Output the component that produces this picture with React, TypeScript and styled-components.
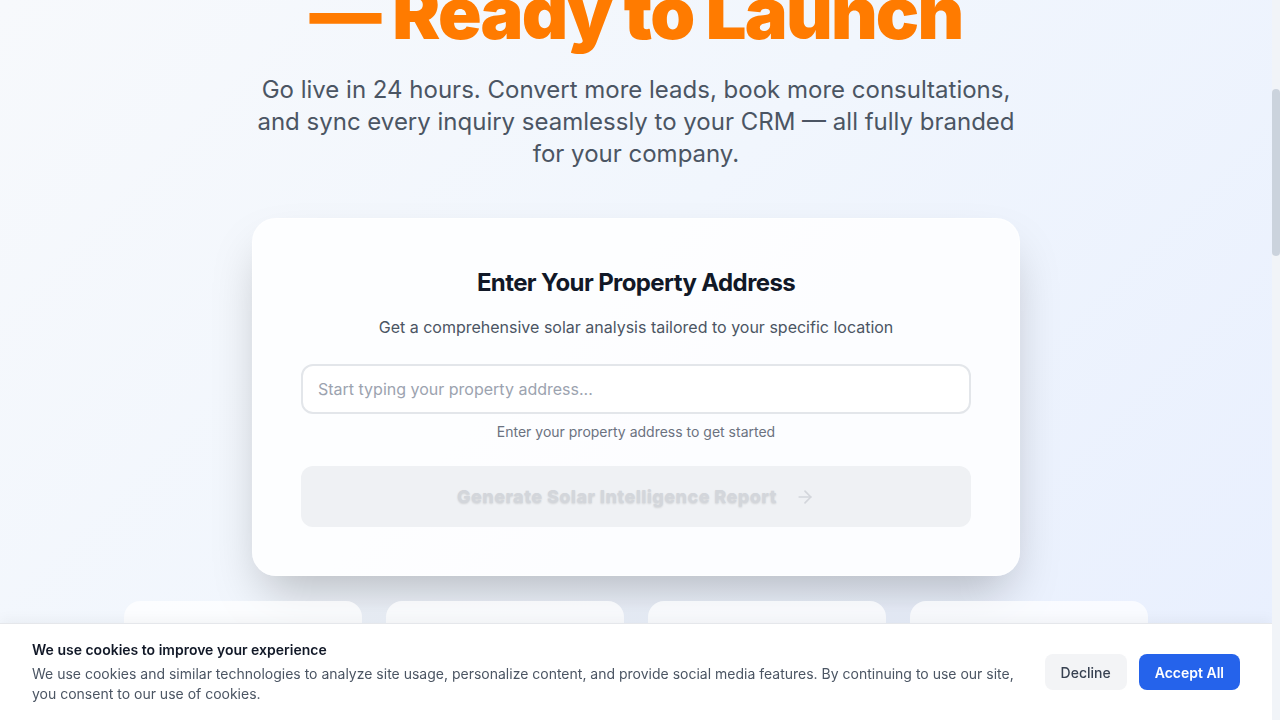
import React, { useLayoutEffect, useRef, useState } from "react";
import styled, { createGlobalStyle } from "styled-components";
import { ArrowRight, Sun, Zap, Link2, Palette } from "lucide-react";

const GlobalStyle = createGlobalStyle`
  html, body { margin: 0; padding: 0; overflow: hidden; }
  body {
    font-family: Inter, "Noto Sans", "Liberation Sans", sans-serif;
    color: #111827;
    -webkit-font-smoothing: antialiased;
  }
  * { box-sizing: border-box; }
`;

const Frame = styled.div`
  height: 100vh;
  display: flex;
`;

const Scroller = styled.div`
  flex: 1;
  min-width: 0;
  height: 100%;
  overflow-y: scroll;
  scrollbar-width: none;
  background: linear-gradient(135deg, #f7f9fc 0%, #f1f6fd 45%, #e8effe 100%);
  &::-webkit-scrollbar { display: none; }
`;

const Rail = styled.div`
  position: relative;
  width: 8px;
  flex-shrink: 0;
  background: #f1f4f8;
`;

const Thumb = styled.div`
  position: absolute;
  left: 0;
  right: 0;
  border-radius: 4px;
  background: #cbd3dd;
`;

const Page = styled.div`
  min-height: 3007px;
`;

const Nav = styled.nav`
  height: 72px;
  display: flex;
  align-items: center;
  justify-content: space-between;
  padding: 0 48px;
`;

const Logo = styled.div`
  font-weight: 800;
  font-size: 20px;
  color: #111827;
`;

const Hero = styled.section`
  display: flex;
  flex-direction: column;
  align-items: center;
  padding: 150px 24px 0;
`;

const Badge = styled.div`
  height: 36px;
  display: flex;
  align-items: center;
  padding: 0 16px;
  border-radius: 999px;
  background: #fff3e6;
  color: #c2410c;
  font-size: 14px;
  font-weight: 600;
  margin-bottom: 32px;
`;

const Title = styled.h1`
  margin: 0 0 25px;
  font-size: 72px;
  line-height: 72px;
  font-weight: 900;
  letter-spacing: -0.025em;
  text-align: center;
  color: #111827;
`;

const TitleLine = styled.span<{ $accent?: boolean }>`
  display: block;
  color: ${(p) => (p.$accent ? "#ff7b00" : "#111827")};
`;

const Lead = styled.p`
  margin: 0;
  max-width: 768px;
  font-size: 24px;
  line-height: 32px;
  color: #4b5563;
  text-align: center;
`;

const Card = styled.div`
  margin-top: 48px;
  width: 768px;
  padding: 48px;
  border-radius: 24px;
  background: rgba(255, 255, 255, 0.82);
  border: 1px solid rgba(255, 255, 255, 0.6);
  box-shadow: 0 25px 50px -12px rgba(0, 0, 0, 0.25);
  display: flex;
  flex-direction: column;
  align-items: stretch;
`;

const CardTitle = styled.h2`
  margin: 0 0 16px;
  font-size: 24px;
  line-height: 32px;
  font-weight: 700;
  letter-spacing: -0.025em;
  text-align: center;
  color: #111827;
`;

const CardSub = styled.p`
  margin: 0 0 25px;
  font-size: 16px;
  line-height: 24px;
  color: #4b5563;
  text-align: center;
`;

const AddressInput = styled.input`
  height: 50px;
  width: 100%;
  padding: 0 15px;
  border: 2px solid #e3e6ea;
  border-radius: 12px;
  background: #fff;
  font-family: inherit;
  font-size: 16px;
  color: #111827;
  outline: none;
  &::placeholder { color: #9ca3af; }
`;

const Helper = styled.p`
  margin: 8px 0 24px;
  font-size: 14px;
  line-height: 20px;
  color: #6b7280;
  text-align: center;
`;

const GenerateButton = styled.button`
  height: 61px;
  width: 100%;
  border: none;
  border-radius: 12px;
  background: #eff1f4;
  display: flex;
  align-items: center;
  justify-content: center;
  gap: 18px;
  font-family: inherit;
  font-size: 18px;
  font-weight: 800;
  letter-spacing: 0.025em;
  color: #d3d6db;
  text-shadow: 0 1px 2px rgba(0, 0, 0, 0.12);
  cursor: not-allowed;
  padding: 0;
`;

const Features = styled.div`
  margin-top: 25px;
  width: 1024px;
  display: grid;
  grid-template-columns: repeat(4, 1fr);
  gap: 24px;
`;

const Feature = styled.div`
  background: rgba(255, 255, 255, 0.72);
  border-radius: 16px;
  padding: 24px;
  display: flex;
  flex-direction: column;
  gap: 12px;
`;

const FeatureIcon = styled.div`
  width: 48px;
  height: 48px;
  border-radius: 12px;
  background: #fff1e0;
  color: #ff7b00;
  display: flex;
  align-items: center;
  justify-content: center;
`;

const FeatureTitle = styled.h3`
  margin: 0;
  font-size: 18px;
  font-weight: 700;
  color: #111827;
`;

const FeatureText = styled.p`
  margin: 0;
  font-size: 14px;
  line-height: 20px;
  color: #4b5563;
`;

const CookieBar = styled.div`
  position: sticky;
  bottom: 0;
  background: #ffffff;
  border-top: 1px solid #e5e7eb;
  box-shadow: 0 -4px 12px rgba(0, 0, 0, 0.04);
  padding: 16px 32px;
  display: flex;
  align-items: center;
  gap: 24px;
  z-index: 50;
`;

const CookieText = styled.div`
  flex: 1;
`;

const CookieTitle = styled.p`
  margin: 0 0 4px;
  font-size: 14px;
  line-height: 20px;
  font-weight: 600;
  color: #111827;
`;

const CookieBody = styled.p`
  margin: 0;
  font-size: 14px;
  line-height: 20px;
  color: #4b5563;
`;

const CookieActions = styled.div`
  display: flex;
  gap: 12px;
  flex-shrink: 0;
`;

const CookieButton = styled.button<{ $primary?: boolean }>`
  height: 36px;
  padding: 0 16px;
  border: none;
  border-radius: 8px;
  font-family: inherit;
  font-size: 14px;
  font-weight: ${(p) => (p.$primary ? 600 : 500)};
  background: ${(p) => (p.$primary ? "#2563eb" : "#f3f4f6")};
  color: ${(p) => (p.$primary ? "#ffffff" : "#374151")};
  cursor: pointer;
`;

const features = [
  { icon: <Sun size={24} />, title: "Instant Analysis", text: "Roof, sun exposure and savings estimates in seconds." },
  { icon: <Zap size={24} />, title: "More Conversions", text: "Turn anonymous visitors into qualified solar leads." },
  { icon: <Link2 size={24} />, title: "CRM Sync", text: "Every inquiry lands in your CRM automatically." },
  { icon: <Palette size={24} />, title: "Fully Branded", text: "Your colours, your logo, your domain." },
];

export default function App() {
  const scrollRef = useRef<HTMLDivElement>(null);
  const leadRef = useRef<HTMLParagraphElement>(null);
  const [thumb, setThumb] = useState({ top: 0, height: 0 });

  const updateThumb = () => {
    const sc = scrollRef.current;
    if (!sc) return;
    const ratio = sc.clientHeight / sc.scrollHeight;
    setThumb({ top: sc.scrollTop * ratio, height: sc.clientHeight * ratio });
  };

  useLayoutEffect(() => {
    const sc = scrollRef.current;
    const el = leadRef.current;
    if (!sc || !el) return;
    const top = el.getBoundingClientRect().top - sc.getBoundingClientRect().top + sc.scrollTop;
    sc.scrollTop = top - 74;
    updateThumb();
  }, []);

  return (
    <>
      <GlobalStyle />
      <Frame>
        <Scroller ref={scrollRef} onScroll={updateThumb}>
          <Page>
            <Nav>
              <Logo>SolarWidget</Logo>
            </Nav>
            <Hero>
              <Badge>White-label solar lead widget</Badge>
              <Title>
                <TitleLine>Your Solar Lead Engine</TitleLine>
                <TitleLine $accent>— Ready to Launch</TitleLine>
              </Title>
              <Lead ref={leadRef}>
                Go live in 24 hours. Convert more leads, book more consultations, and sync every inquiry
                seamlessly to your CRM — all fully branded for your company.
              </Lead>
              <Card>
                <CardTitle>Enter Your Property Address</CardTitle>
                <CardSub>Get a comprehensive solar analysis tailored to your specific location</CardSub>
                <AddressInput placeholder="Start typing your property address..." />
                <Helper>Enter your property address to get started</Helper>
                <GenerateButton disabled>
                  Generate Solar Intelligence Report
                  <ArrowRight size={20} strokeWidth={2} />
                </GenerateButton>
              </Card>
              <Features>
                {features.map((f) => (
                  <Feature key={f.title}>
                    <FeatureIcon>{f.icon}</FeatureIcon>
                    <FeatureTitle>{f.title}</FeatureTitle>
                    <FeatureText>{f.text}</FeatureText>
                  </Feature>
                ))}
              </Features>
            </Hero>
          </Page>
          <CookieBar>
            <CookieText>
              <CookieTitle>We use cookies to improve your experience</CookieTitle>
              <CookieBody>
                We use cookies and similar technologies to analyze site usage, personalize content, and provide
                social media features. By continuing to use our site, you consent to our use of cookies.
              </CookieBody>
            </CookieText>
            <CookieActions>
              <CookieButton>Decline</CookieButton>
              <CookieButton $primary>Accept All</CookieButton>
            </CookieActions>
          </CookieBar>
        </Scroller>
        <Rail>
          <Thumb style={{ top: thumb.top, height: thumb.height }} />
        </Rail>
      </Frame>
    </>
  );
}
